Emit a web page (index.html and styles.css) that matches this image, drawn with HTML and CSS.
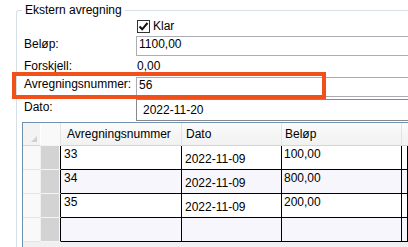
FILE: index.html
```html
<!DOCTYPE html>
<html lang="no">
<head>
    <meta charset="UTF-8">
    <title>Ekstern avregning</title>
    <link rel="stylesheet" href="styles.css">
</head>
<body>
    <fieldset class="group">
        <legend>Ekstern avregning</legend>
        <div class="form">
            <div class="label"></div>
            <div class="check-row">
                <span class="checkbox">
                    <svg width="11" height="11" viewBox="0 0 11 11"><path d="M1.5 5.5 L4.2 8.3 L9.5 2" fill="none" stroke="#111" stroke-width="2"/></svg>
                </span>
                <span class="check-text">Klar</span>
            </div>

            <div class="label pad1">Beløp:</div>
            <div class="textbox">1100,00</div>

            <div class="label pad3">Forskjell:</div>
            <div class="value">0,00</div>

            <div class="label">Avregningsnummer:</div>
            <div class="textbox">56</div>

            <div class="label pad3">Dato:</div>
            <div class="datebox">2022-11-20</div>
        </div>

        <div class="datagrid">
            <div class="row header">
                <div class="cell corner"><span class="tri"></span></div>
                <div class="cell sel"></div>
                <div class="cell">Avregningsnummer</div>
                <div class="cell hd-dato">Dato</div>
                <div class="cell hd-belop">Beløp</div>
                <div class="cell"></div>
            </div>
            <div class="row">
                <div class="cell rowhead"></div>
                <div class="cell sel"><span class="marker"></span></div>
                <div class="cell num">33</div>
                <div class="cell date">2022-11-09</div>
                <div class="cell amount">100,00</div>
                <div class="cell"></div>
            </div>
            <div class="row alt">
                <div class="cell rowhead"></div>
                <div class="cell sel"><span class="marker"></span></div>
                <div class="cell num">34</div>
                <div class="cell date">2022-11-09</div>
                <div class="cell amount">800,00</div>
                <div class="cell"></div>
            </div>
            <div class="row">
                <div class="cell rowhead"></div>
                <div class="cell sel"><span class="marker"></span></div>
                <div class="cell num">35</div>
                <div class="cell date">2022-11-09</div>
                <div class="cell amount">200,00</div>
                <div class="cell"></div>
            </div>
            <div class="row alt">
                <div class="cell rowhead"></div>
                <div class="cell sel"><span class="marker"></span></div>
                <div class="cell num"></div>
                <div class="cell date"></div>
                <div class="cell amount"></div>
                <div class="cell"></div>
            </div>
        </div>
    </fieldset>

    <div class="highlight"></div>
</body>
</html>
```

FILE: styles.css
```css
body {
    margin: 0;
    background: #fff;
    font-family: "Liberation Sans", Arial, sans-serif;
    font-size: 12px;
    line-height: 14px;
    color: #000;
    overflow: hidden;
    position: relative;
    height: 247px;
}
.group {
    box-sizing: border-box;
    margin: 3px 0 0 16px;
    padding: 0 0 0 5px;
    width: 392px;
    border: 1px solid #d5dfe5;
    border-right: 0;
    border-bottom: 0;
    border-radius: 3px 0 0 0;
    min-width: 0;
}
.group legend {
    padding: 0 3px;
    line-height: 14px;
}
.form {
    display: grid;
    grid-template-columns: 114px 1fr;
    grid-template-rows: 19px 20px 21px 20px 25px;
}
.label {
    padding-left: 2px;
    white-space: nowrap;
}
.pad1 {
    padding-top: 1px;
}
.pad3 {
    padding-top: 3px;
}
.check-row {
    display: flex;
    align-items: flex-start;
    padding-left: 1px;
}
.checkbox {
    box-sizing: border-box;
    width: 13px;
    height: 13px;
    margin-top: 3px;
    border: 1px solid #333;
    background: #fff;
    display: flex;
}
.check-text {
    margin-left: 3px;
    padding-top: 2px;
}
.textbox {
    border: 1px solid #abadb3;
    border-right: 0;
    padding: 0 2px;
    height: 18px;
}
.value {
    padding: 3px 1px 0;
}
.datebox {
    margin-top: 2px;
    border: 1px solid #868a90;
    border-right: 0;
    padding: 3px 0 0 6px;
    height: 17px;
}
.datagrid {
    border-top: 1px solid #7090b0;
    border-left: 1px solid #7090b0;
    background: #f0f0f0;
    height: 124px;
    overflow: hidden;
}
.row {
    display: grid;
    grid-template-columns: 18px 20px 121px 100px 120px 1fr;
    height: 24px;
}
.cell {
    box-sizing: border-box;
    border-right: 1px solid #000;
    border-bottom: 1px solid #000;
    background: #fff;
    white-space: nowrap;
    overflow: hidden;
}
.alt .cell {
    background: #f6f6fc;
}
.header {
    height: 23px;
}
.header .cell {
    background: linear-gradient(#fbfbfb, #f1f1f1);
    border-right: 1px solid #e4e4e4;
    border-bottom: 1px solid #d5d5d5;
    padding: 4px 0 0 6px;
}
.header .hd-dato {
    padding-left: 4px;
}
.header .hd-belop {
    padding-left: 3px;
}
.header .corner {
    background: #f3f3f3;
    border-right: 1px solid #fff;
    position: relative;
    padding: 0;
}
.header .sel {
    border-right: 1px solid #e4e4e4;
    padding: 0;
}
.tri {
    position: absolute;
    right: 3px;
    bottom: 3px;
    width: 0;
    height: 0;
    border-left: 6px solid transparent;
    border-bottom: 6px solid #d0d0d0;
}
.row .rowhead,
.alt .rowhead {
    background: #f9f9f9;
    border-right: 1px solid #f0f0f0;
    border-bottom: 1px solid #e4e4e4;
}
.row .sel,
.alt .sel {
    background: #f9f9f9;
    border-bottom: 1px solid #f4f4f4;
}
.marker {
    display: block;
    width: 18px;
    height: 23px;
    background: #d3d3d3;
}
.num {
    padding: 1px 0 0 3px;
}
.date {
    padding: 6px 0 0 3px;
}
.amount {
    padding: 1px 0 0 2px;
}
.highlight {
    position: absolute;
    left: 12px;
    top: 72px;
    width: 314px;
    height: 27px;
    box-sizing: border-box;
    border: 4px solid #f2501a;
}
```
